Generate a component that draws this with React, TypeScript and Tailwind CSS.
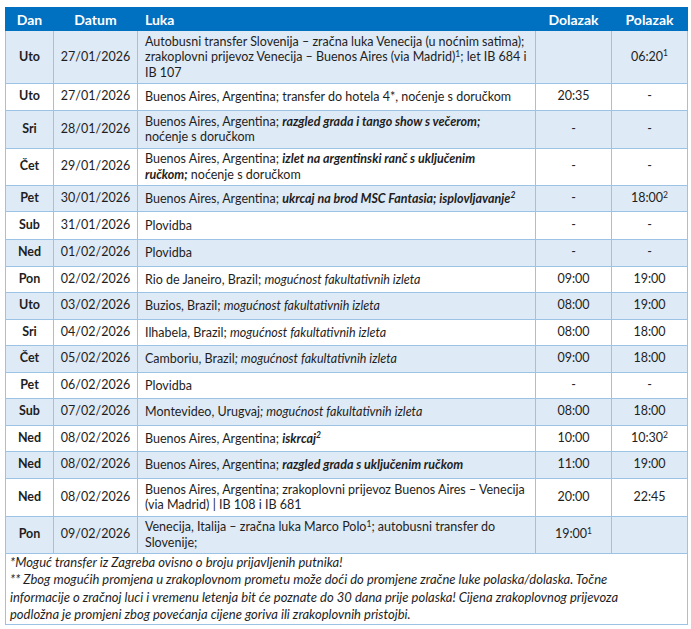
import type { ReactNode } from 'react';

type Row = {
  dan: string;
  datum: string;
  luka: ReactNode;
  dolazak: ReactNode;
  polazak: ReactNode;
  h?: string;
};

const Sup = ({ n }: { n: string }) => <sup className="text-[8.5px] leading-none">{n}</sup>;

const BI = ({ children }: { children: ReactNode }) => <b className="font-bold italic">{children}</b>;

const izleta = <i>mogućnost fakultativnih izleta</i>;

const rows: Row[] = [
  {
    dan: 'Uto',
    datum: '27/01/2026',
    luka: (
      <>
        Autobusni transfer Slovenija – zračna luka Venecija (u noćnim satima);
        <br />
        zrakoplovni prijevoz Venecija – Buenos Aires (via Madrid)
        <Sup n="1" />; let IB 684 i<br />
        IB 107
      </>
    ),
    dolazak: '',
    polazak: (
      <>
        06:20
        <Sup n="1" />
      </>
    ),
    h: 'h-[53px]',
  },
  {
    dan: 'Uto',
    datum: '27/01/2026',
    luka: 'Buenos Aires, Argentina; transfer do hotela 4*, noćenje s doručkom',
    dolazak: '20:35',
    polazak: '-',
  },
  {
    dan: 'Sri',
    datum: '28/01/2026',
    luka: (
      <>
        Buenos Aires, Argentina; <BI>razgled grada i tango show s večerom;</BI>
        <br />
        noćenje s doručkom
      </>
    ),
    dolazak: '-',
    polazak: '-',
    h: 'h-[38px]',
  },
  {
    dan: 'Čet',
    datum: '29/01/2026',
    luka: (
      <>
        Buenos Aires, Argentina;{' '}
        <BI>
          izlet na argentinski ranč s uključenim
          <br />
          ručkom;
        </BI>{' '}
        noćenje s doručkom
      </>
    ),
    dolazak: '-',
    polazak: '-',
    h: 'h-[37px]',
  },
  {
    dan: 'Pet',
    datum: '30/01/2026',
    luka: (
      <>
        Buenos Aires, Argentina;{' '}
        <BI>
          ukrcaj na brod MSC Fantasia; isplovljavanje
          <Sup n="2" />
        </BI>
      </>
    ),
    dolazak: '-',
    polazak: (
      <>
        18:00
        <Sup n="2" />
      </>
    ),
  },
  { dan: 'Sub', datum: '31/01/2026', luka: 'Plovidba', dolazak: '-', polazak: '-', h: 'h-[28px]' },
  { dan: 'Ned', datum: '01/02/2026', luka: 'Plovidba', dolazak: '-', polazak: '-' },
  {
    dan: 'Pon',
    datum: '02/02/2026',
    luka: <>Rio de Janeiro, Brazil; {izleta}</>,
    dolazak: '09:00',
    polazak: '19:00',
  },
  { dan: 'Uto', datum: '03/02/2026', luka: <>Buzios, Brazil; {izleta}</>, dolazak: '08:00', polazak: '19:00' },
  { dan: 'Sri', datum: '04/02/2026', luka: <>Ilhabela, Brazil; {izleta}</>, dolazak: '08:00', polazak: '18:00' },
  {
    dan: 'Čet',
    datum: '05/02/2026',
    luka: (
      <>
        Camboriu, Brazil<i>; mogućnost fakultativnih izleta</i>
      </>
    ),
    dolazak: '09:00',
    polazak: '18:00',
  },
  { dan: 'Pet', datum: '06/02/2026', luka: 'Plovidba', dolazak: '-', polazak: '-' },
  {
    dan: 'Sub',
    datum: '07/02/2026',
    luka: (
      <>
        Montevideo, Urugvaj<i>; mogućnost fakultativnih izleta</i>
      </>
    ),
    dolazak: '08:00',
    polazak: '18:00',
  },
  {
    dan: 'Ned',
    datum: '08/02/2026',
    luka: (
      <>
        Buenos Aires, Argentina;{' '}
        <BI>
          iskrcaj
          <Sup n="2" />
        </BI>
      </>
    ),
    dolazak: '10:00',
    polazak: (
      <>
        10:30
        <Sup n="2" />
      </>
    ),
  },
  {
    dan: 'Ned',
    datum: '08/02/2026',
    luka: (
      <>
        Buenos Aires, Argentina; <BI>razgled grada s uključenim ručkom</BI>
      </>
    ),
    dolazak: '11:00',
    polazak: '19:00',
  },
  {
    dan: 'Ned',
    datum: '08/02/2026',
    luka: (
      <>
        Buenos Aires, Argentina; zrakoplovni prijevoz Buenos Aires – Venecija
        <br />
        (via Madrid) | IB 108 i IB 681
      </>
    ),
    dolazak: '20:00',
    polazak: '22:45',
    h: 'h-[38px]',
  },
  {
    dan: 'Pon',
    datum: '09/02/2026',
    luka: (
      <>
        Venecija, Italija – zračna luka Marco Polo
        <Sup n="1" />; autobusni transfer do
        <br />
        Slovenije;
      </>
    ),
    dolazak: (
      <>
        19:00
        <Sup n="1" />
      </>
    ),
    polazak: '',
    h: 'h-[37px]',
  },
];

export default function App() {
  return (
    <div className="min-h-screen bg-white pt-[7px] pl-[5px] font-['Lato',sans-serif] text-[12.5px] text-[#1e1e1e]">
      <table className="w-[682px] table-fixed border-collapse border border-[#9cc2e5]">
        <colgroup>
          <col className="w-[48px]" />
          <col className="w-[84px]" />
          <col className="w-[398px]" />
          <col className="w-[76px]" />
          <col className="w-[76px]" />
        </colgroup>
        <thead>
          <tr className="h-[23px] bg-[#0070c0] text-[14px] font-bold text-white">
            <th className="border border-[#0070c0] text-center">Dan</th>
            <th className="border border-[#0070c0] text-center">Datum</th>
            <th className="border border-[#0070c0] px-[7px] text-left">Luka</th>
            <th className="border border-[#0070c0] text-center">Dolazak</th>
            <th className="border border-[#0070c0] text-center">Polazak</th>
          </tr>
        </thead>
        <tbody>
          {rows.map((r, i) => (
            <tr key={i} className={`${r.h ?? 'h-[26.5px]'} ${i % 2 === 0 ? 'bg-[#deeaf6]' : 'bg-white'}`}>
              <td className="border border-[#9cc2e5] text-center font-bold">{r.dan}</td>
              <td className="border border-[#9cc2e5] text-center">{r.datum}</td>
              <td className="border border-[#9cc2e5] px-[7px] py-0 leading-[15.5px] whitespace-nowrap">{r.luka}</td>
              <td className="border border-[#9cc2e5] text-center">{r.dolazak}</td>
              <td className="border border-[#9cc2e5] text-center">{r.polazak}</td>
            </tr>
          ))}
          <tr className="h-[71px]">
            <td
              colSpan={5}
              className="border border-[#9cc2e5] px-[4px] py-0 text-[13px] italic leading-[17.5px] whitespace-nowrap"
            >
              *Moguć transfer iz Zagreba ovisno o broju prijavljenih putnika!
              <br />
              ** Zbog mogućih promjena u zrakoplovnom prometu može doći do promjene zračne luke polaska/dolaska. Točne
              <br />
              informacije o zračnoj luci i vremenu letenja bit će poznate do 30 dana prije polaska! Cijena zrakoplovnog
              prijevoza
              <br />
              podložna je promjeni zbog povećanja cijene goriva ili zrakoplovnih pristojbi.
            </td>
          </tr>
        </tbody>
      </table>
    </div>
  );
}
